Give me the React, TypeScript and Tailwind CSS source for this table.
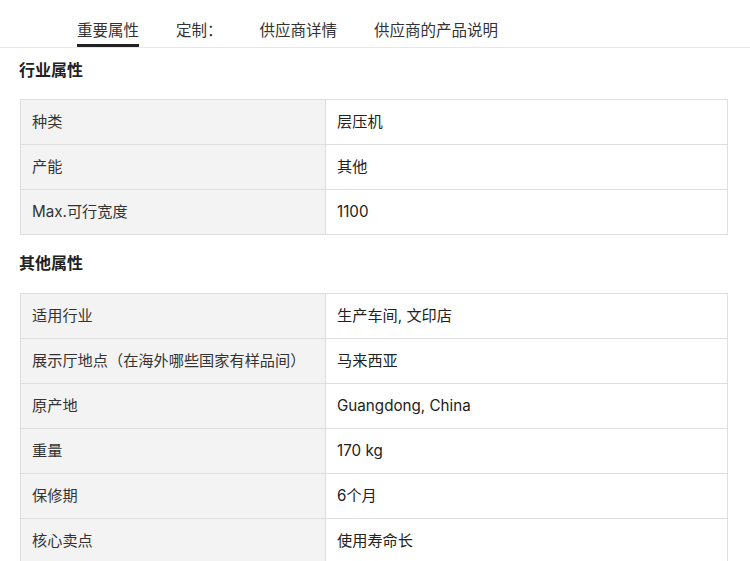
const font = { fontFamily: '"Inter", "Noto Sans CJK SC", sans-serif' };

const tabs = ['重要属性', '定制：', '供应商详情', '供应商的产品说明'];

const industry = [
  ['种类', '层压机'],
  ['产能', '其他'],
  ['Max.可行宽度', '1100'],
];

const other = [
  ['适用行业', '生产车间, 文印店'],
  ['展示厅地点（在海外哪些国家有样品间）', '马来西亚'],
  ['原产地', 'Guangdong, China'],
  ['重量', '170 kg'],
  ['保修期', '6个月'],
  ['核心卖点', '使用寿命长'],
];

function Table({ rows }: { rows: string[][] }) {
  return (
    <div className="ml-5 mr-[22px] border-x border-b border-[#dedede]">
      {rows.map(([k, v]) => (
        <div key={k} className="grid grid-cols-[305px_1fr] h-[45px] border-t border-[#dedede]">
          <div className="bg-[#f3f3f3] border-r border-[#dedede] flex items-center pl-[11px] text-[15.2px] text-[#333]">{k}</div>
          <div className="flex items-center pl-[11px] text-[15.2px] text-[#222]">{v}</div>
        </div>
      ))}
    </div>
  );
}

export default function App() {
  return (
    <div className="w-[750px] h-[561px] overflow-hidden bg-white" style={font}>
      <div className="h-[48px] border-b border-[#e8e8e8] flex items-end pl-[77px] gap-[37px]">
        {tabs.map((t, i) => (
          <div
            key={t}
            className={`h-[47px] flex items-center pt-[18px] text-[15.5px] text-[#333] ${i === 0 ? 'border-b-[3px] border-[#222]' : 'border-b-[3px] border-transparent'}`}
          >
            {t}
          </div>
        ))}
      </div>
      <h2 className="pl-[19px] pt-[11px] pb-[18px] text-[16px] font-bold text-[#222] leading-[22px]">行业属性</h2>
      <Table rows={industry} />
      <h2 className="pl-[19px] pt-[17px] pb-[19px] text-[16px] font-bold text-[#222] leading-[22px]">其他属性</h2>
      <Table rows={other} />
    </div>
  );
}
